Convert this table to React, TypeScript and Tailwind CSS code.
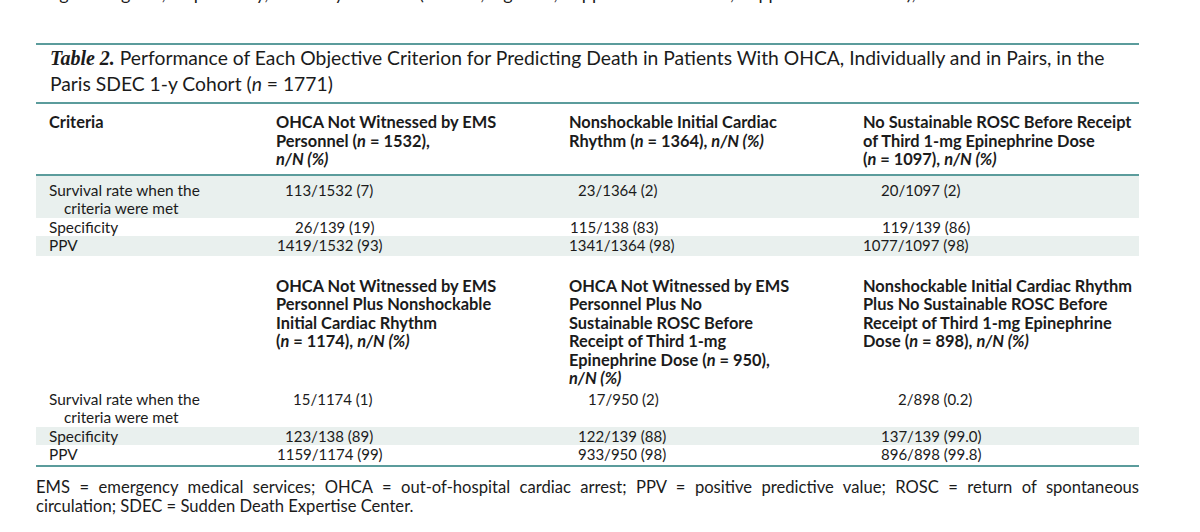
const teal = 'border-[#5b9c9c]';

type Cell = { pad: string; text: string };

function Value({ pad, text }: Cell) {
  return <div className={`${pad} whitespace-nowrap`}>{text}</div>;
}

function HeaderSection1() {
  return (
    <div className={`grid grid-cols-[240px_293px_294px_276px] border-b-2 ${teal} pt-[9px] pb-[5px] text-[16.4px] font-bold leading-[18.5px] whitespace-nowrap`}>
      <div className="pl-[13px]">Criteria</div>
      <div>
        OHCA Not Witnessed by EMS
        <br />
        Personnel (<i>n</i> = 1532),
        <br />
        <i>n/N (%)</i>
      </div>
      <div>
        Nonshockable Initial Cardiac
        <br />
        Rhythm (<i>n</i> = 1364), <i>n/N (%)</i>
      </div>
      <div>
        No Sustainable ROSC Before Receipt
        <br />
        of Third 1-mg Epinephrine Dose
        <br />
        (<i>n</i> = 1097), <i>n/N (%)</i>
      </div>
    </div>
  );
}

function HeaderSection2() {
  return (
    <div className="grid grid-cols-[240px_293px_294px_276px] pt-[21px] text-[16.4px] font-bold leading-[18.5px] whitespace-nowrap">
      <div />
      <div>
        OHCA Not Witnessed by EMS
        <br />
        Personnel Plus Nonshockable
        <br />
        Initial Cardiac Rhythm
        <br />
        (<i>n</i> = 1174), <i>n/N (%)</i>
      </div>
      <div>
        OHCA Not Witnessed by EMS
        <br />
        Personnel Plus No
        <br />
        Sustainable ROSC Before
        <br />
        Receipt of Third 1-mg
        <br />
        Epinephrine Dose (<i>n</i> = 950),
        <br />
        <i>n/N (%)</i>
      </div>
      <div>
        Nonshockable Initial Cardiac Rhythm
        <br />
        Plus No Sustainable ROSC Before
        <br />
        Receipt of Third 1-mg Epinephrine
        <br />
        Dose (<i>n</i> = 898), <i>n/N (%)</i>
      </div>
    </div>
  );
}

function Rows({ shadeFirst, cells }: { shadeFirst: boolean; cells: Cell[][] }) {
  const shade = 'bg-[#e9f0ee]';
  return (
    <div className="leading-[18.5px]">
      <div className={`grid grid-cols-[240px_293px_294px_276px] ${shadeFirst ? `pt-[5px] ${shade}` : 'pt-[2px]'}`}>
        <div className="pl-[13px] text-[15.4px]">
          Survival rate when the
          <br />
          <span className="pl-[15px]">criteria were met</span>
        </div>
        {cells[0].map((c, i) => (
          <Value key={i} {...c} />
        ))}
      </div>
      <div className={`grid grid-cols-[240px_293px_294px_276px] ${shadeFirst ? '' : shade}`}>
        <div className="pl-[13px] text-[15.4px]">Specificity</div>
        {cells[1].map((c, i) => (
          <Value key={i} {...c} />
        ))}
      </div>
      <div className={`grid grid-cols-[240px_293px_294px_276px] pb-[1px] ${shadeFirst ? shade : ''}`}>
        <div className="pl-[13px] text-[15.4px]">PPV</div>
        {cells[2].map((c, i) => (
          <Value key={i} {...c} />
        ))}
      </div>
    </div>
  );
}

export default function App() {
  const section1: Cell[][] = [
    [
      { pad: 'pl-[9px]', text: '113/1532 (7)' },
      { pad: 'pl-[9px]', text: '23/1364 (2)' },
      { pad: 'pl-[18px]', text: '20/1097 (2)' },
    ],
    [
      { pad: 'pl-[19px]', text: '26/139 (19)' },
      { pad: 'pl-[1px]', text: '115/138 (83)' },
      { pad: 'pl-[19px]', text: '119/139 (86)' },
    ],
    [
      { pad: 'pl-[1px]', text: '1419/1532 (93)' },
      { pad: 'pl-0', text: '1341/1364 (98)' },
      { pad: 'pl-0', text: '1077/1097 (98)' },
    ],
  ];

  const section2: Cell[][] = [
    [
      { pad: 'pl-[17px]', text: '15/1174 (1)' },
      { pad: 'pl-[19px]', text: '17/950 (2)' },
      { pad: 'pl-[35px]', text: '2/898 (0.2)' },
    ],
    [
      { pad: 'pl-[9px]', text: '123/138 (89)' },
      { pad: 'pl-[9px]', text: '122/139 (88)' },
      { pad: 'pl-[18px]', text: '137/139 (99.0)' },
    ],
    [
      { pad: 'pl-[1px]', text: '1159/1174 (99)' },
      { pad: 'pl-[9px]', text: '933/950 (98)' },
      { pad: 'pl-[18px]', text: '896/898 (99.8)' },
    ],
  ];

  return (
    <div className="h-[532px] w-[1200px] overflow-hidden bg-white font-['Lato','Open_Sans',sans-serif] text-[15px] text-[#1b1b1b]">
      {/* tail of the paragraph above, cut off by the screenshot: only descenders show */}
      <div className="h-[6px] overflow-hidden pl-[36px]">
        <p className="-mt-[17px] text-[18px] leading-[20px] whitespace-nowrap">
          diagnostic gains, respectively, for every criterion (Table 2, Figure 1, Supplemental Table 2, Supplemental Table 3),
        </p>
      </div>

      <div className="mt-[37px] ml-[36px] w-[1103px]">
        <div className={`border-t-2 border-b-2 ${teal} pl-[14px] pb-[6px] text-[19.3px] leading-[25px] whitespace-nowrap`}>
          <span className="font-['Liberation_Serif',serif] text-[20px] font-bold italic">Table 2.</span> Performance of Each
          Objective Criterion for Predicting Death in Patients With OHCA, Individually and in Pairs, in the
          <br />
          Paris SDEC 1-y Cohort (<i>n</i> = 1771)
        </div>

        <HeaderSection1 />
        <Rows shadeFirst={true} cells={section1} />

        <HeaderSection2 />
        <div className={`border-b-2 ${teal}`}>
          <Rows shadeFirst={false} cells={section2} />
        </div>

        <div className="pt-[11px] text-[16.6px] leading-[19px]">
          <p className="text-justify [text-align-last:justify]">
            EMS = emergency medical services; OHCA = out-of-hospital cardiac arrest; PPV = positive predictive value; ROSC
            = return of spontaneous
          </p>
          <p>circulation; SDEC = Sudden Death Expertise Center.</p>
        </div>
      </div>
    </div>
  );
}
